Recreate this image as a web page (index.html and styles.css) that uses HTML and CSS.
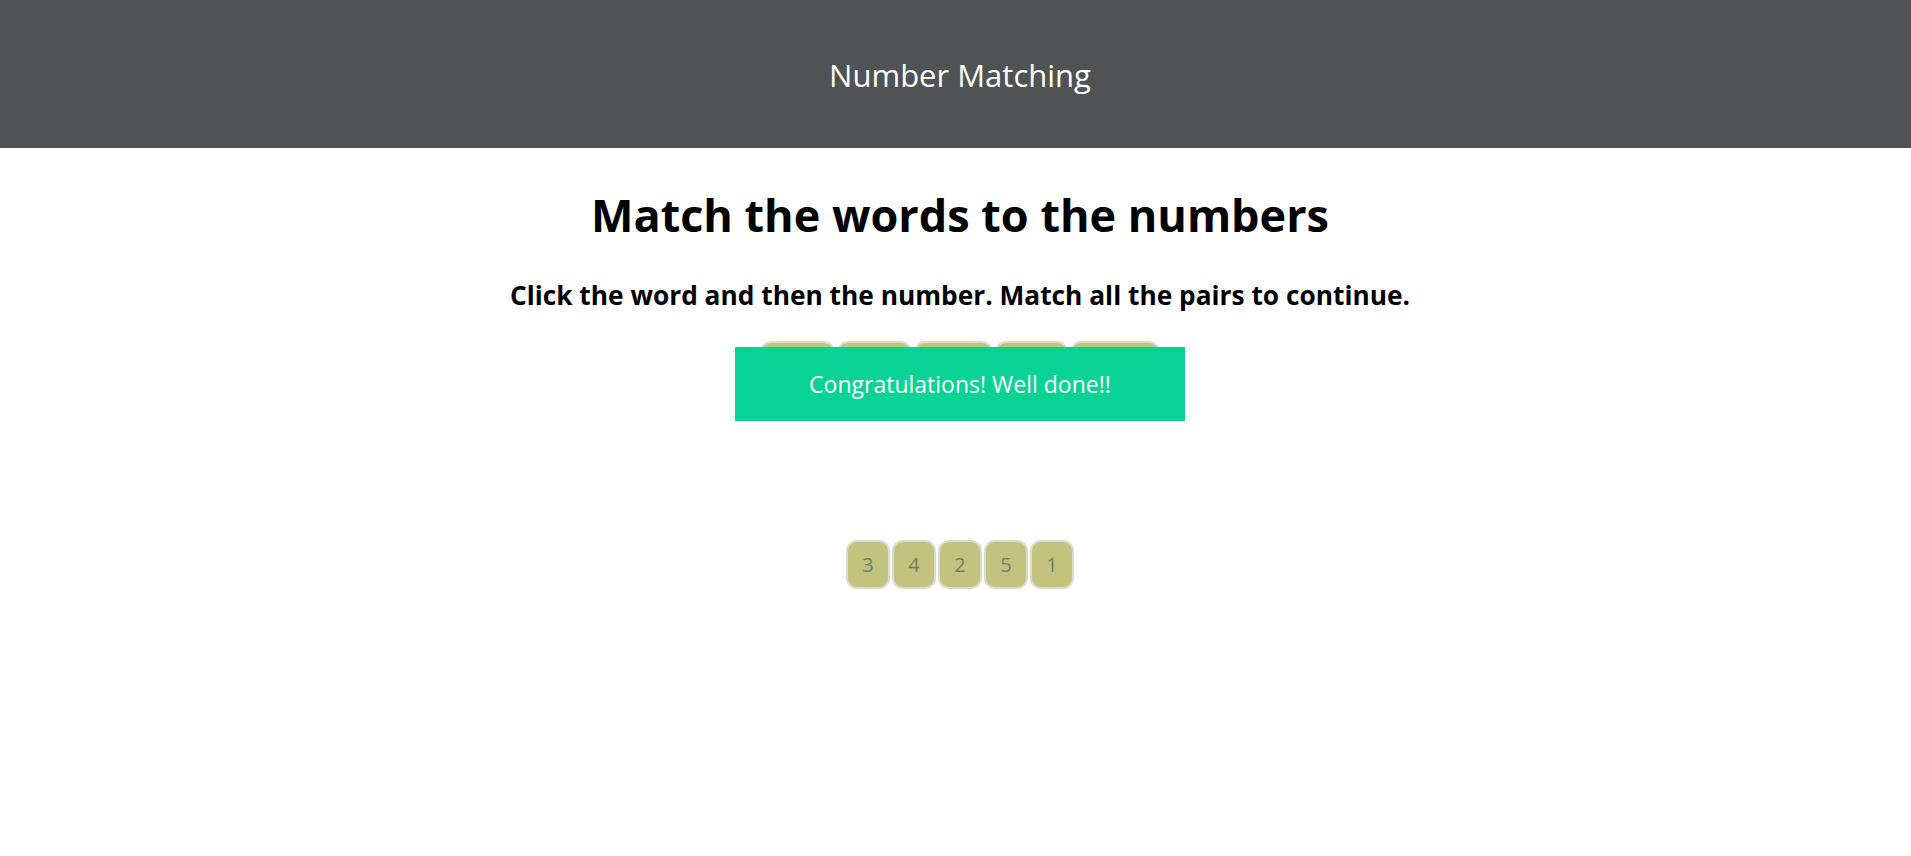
FILE: index.html
```html
<!DOCTYPE html>
<html lang="en">
<head>
<meta charset="utf-8">
<title>Number Matching</title>
<link rel="stylesheet" href="styles.css">
</head>
<body>
<div class="page">
  <header class="topbar">
    <div class="topbar-title">Number Matching</div>
  </header>
  <main class="game">
    <h1 class="game-title">Match the words to the numbers</h1>
    <h2 class="game-instructions">Click the word and then the number. Match all the pairs to continue.</h2>
    <div class="board">
      <div class="tile-row words">
        <div class="tile">one</div>
        <div class="tile">two</div>
        <div class="tile">four</div>
        <div class="tile">five</div>
        <div class="tile">three</div>
      </div>
      <div class="tile-row numbers">
        <div class="tile">3</div>
        <div class="tile">4</div>
        <div class="tile">2</div>
        <div class="tile">5</div>
        <div class="tile">1</div>
      </div>
      <div class="success">Congratulations! Well done!!</div>
    </div>
  </main>
</div>
</body>
</html>
```
FILE: styles.css
```css
html, body {
  margin: 0;
  padding: 0;
  overflow: hidden;
  background: #ffffff;
}

body {
  font-family: "Open Sans", "Noto Sans", "Liberation Sans", sans-serif;
  color: #000;
}

.page {
  width: 1920px;
}

.topbar {
  height: 148px;
  background: #4f5353;
  display: flex;
  align-items: center;
  justify-content: center;
}

.topbar-title {
  color: #ffffff;
  font-size: 31px;
  line-height: 1;
  padding-top: 2px;
}

.game {
  display: flex;
  flex-direction: column;
  align-items: center;
}

.game-title {
  margin: 35px 0 0;
  font-size: 45px;
  font-weight: 700;
  line-height: 64px;
}

.game-instructions {
  margin: 31px 0 0;
  font-size: 26.3px;
  font-weight: 700;
  line-height: 34px;
}

.board {
  position: relative;
  margin-top: 29px;
  display: flex;
  flex-direction: column;
  align-items: center;
  gap: 150px;
}

.tile-row {
  display: flex;
  gap: 2px;
}

.tile {
  background: #c2c37f;
  border: 2px solid #dcdccc;
  border-radius: 11px;
  padding: 10px 14px;
  font-size: 20px;
  line-height: 25px;
  color: #7b7b6c;
  text-align: center;
}

.numbers .tile {
  box-sizing: border-box;
  width: 44px;
  padding: 10px 0;
}

.words .tile {
  padding: 10px 18px;
}

.success {
  position: absolute;
  top: 6px;
  left: 50%;
  transform: translateX(-50%);
  width: 450px;
  height: 74px;
  background: #09d394;
  color: #ffffff;
  font-size: 23px;
  display: flex;
  align-items: center;
  justify-content: center;
}
```
